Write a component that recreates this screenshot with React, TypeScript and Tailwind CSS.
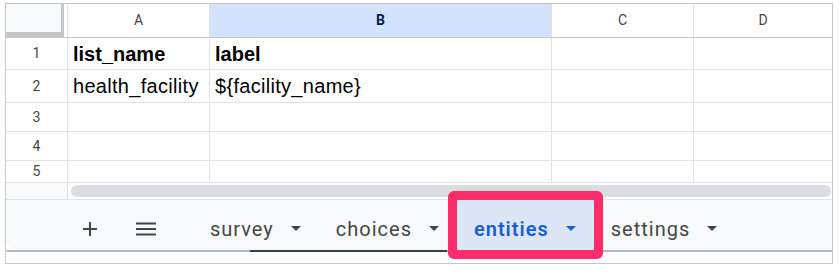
const COLS = [
  { key: "A", w: "w-[142px]" },
  { key: "B", w: "w-[342px]" },
  { key: "C", w: "w-[142px]" },
  { key: "D", w: "w-[138px]" },
];

const ROWS: { n: number; h: string; cells: string[]; bold?: boolean }[] = [
  { n: 1, h: "h-[32px]", cells: ["list_name", "label", "", ""], bold: true },
  { n: 2, h: "h-[33px]", cells: ["health_facility", "${facility_name}", "", ""] },
  { n: 3, h: "h-[29px]", cells: ["", "", "", ""] },
  { n: 4, h: "h-[29px]", cells: ["", "", "", ""] },
  { n: 5, h: "h-[22px]", cells: ["", "", "", ""] },
];

const Caret = ({ blue }: { blue?: boolean }) => (
  <svg width="10" height="5" viewBox="0 0 10 5" className="shrink-0">
    <path d="M0 0h10L5 5z" fill={blue ? "#1a5fd0" : "#444746"} />
  </svg>
);

const SheetTab = ({ name, active }: { name: string; active?: boolean }) => (
  <div
    className={
      active
        ? "relative flex items-center gap-[17px] h-full pt-[7px] pl-[17px] pr-[18px] bg-[#dde6f6]"
        : "flex items-center gap-[17px] h-full pt-[7px] pl-[17px] pr-[18px]"
    }
  >
    {active && (
      <div className="absolute -inset-[9px] border-[9px] border-[#fd2c6a] rounded-[6px]" />
    )}
    <span
      className={
        active
          ? "text-[20px] font-semibold tracking-[1px] text-[#1a5fd0]"
          : "text-[20px] tracking-[1px] text-[#444746]"
      }
    >
      {name}
    </span>
    <Caret blue={active} />
  </div>
);

const App = () => {
  return (
    <div className="w-[840px] h-[272px] bg-white pt-[3px] pl-[5px]">
      <div className="w-[828px] h-[261px] border border-[#c4c7c5] flex flex-col overflow-hidden">
        {/* column headers */}
        <div className="flex h-[34px] shrink-0 border-b border-[#c4c7c5] font-['Roboto',sans-serif] text-[14px]">
          <div className="w-[62px] shrink-0 flex border-r border-[#e1e3e1]">
            <div className="w-[58px] h-[33px] -mb-px bg-[#f8f9fa] border-b-[5px] border-r-[3px] border-[#c4c7c5]" />
          </div>
          {COLS.map((c) => (
            <div
              key={c.key}
              className={
                c.key === "B"
                  ? `${c.w} shrink-0 flex items-center justify-center bg-[#d3e3fd] border-r border-[#e1e3e1] font-bold text-[#041e49]`
                  : `${c.w} shrink-0 flex items-center justify-center border-r border-[#e1e3e1] text-[#444746] last:border-r-0`
              }
            >
              {c.key}
            </div>
          ))}
        </div>

        {/* rows */}
        {ROWS.map((r) => (
          <div key={r.n} className={`flex ${r.h} shrink-0 border-b border-[#e1e3e1]`}>
            <div className="w-[62px] shrink-0 flex items-center justify-center border-r border-[#e1e3e1] font-['Roboto',sans-serif] text-[14px] text-[#444746]">
              {r.n}
            </div>
            {COLS.map((c, i) => (
              <div
                key={c.key}
                className={`${c.w} shrink-0 flex items-center px-[5px] border-r border-[#e1e3e1] last:border-r-0 font-['Liberation_Sans',Arial,sans-serif] text-[20px] text-black whitespace-nowrap ${r.bold ? "font-bold" : "tracking-[0.3px]"}`}
              >
                {r.cells[i]}
              </div>
            ))}
          </div>
        ))}

        {/* horizontal scrollbar */}
        <div className="flex h-[16px] shrink-0 items-center">
          <div className="w-[62px] h-full shrink-0 bg-[#f8f9fa] border-r border-[#e1e3e1]" />
          <div className="flex-1 h-[12px] ml-[3px] mr-[1px] rounded-full bg-[#dadce0]" />
        </div>

        {/* sheet tab bar */}
        <div className="h-[53px] shrink-0 flex flex-col">
          <div className="flex-1 flex items-center bg-[#f8f9fa] border-t border-[#e1e3e1] rounded-bl-[12px] font-['Roboto',sans-serif]">
            <div className="flex items-center h-full pt-[7px] pl-[77px] gap-[39px] mr-[37px]">
              <svg width="14" height="14" viewBox="0 0 14 14">
                <path d="M7 0v14M0 7h14" stroke="#444746" strokeWidth="2" />
              </svg>
              <svg width="20" height="14" viewBox="0 0 20 14">
                <path d="M0 1.5h20M0 7h20M0 12.5h20" stroke="#444746" strokeWidth="2" />
              </svg>
            </div>
            <SheetTab name="survey" />
            <SheetTab name="choices" />
            <SheetTab name="entities" active />
            <SheetTab name="settings" />
          </div>
          <div className="flex h-[2px] shrink-0">
            <div className="w-[244px] bg-[#b5b8bb] rounded-bl-[12px]" />
            <div className="w-[197px] bg-[#3c4043]" />
            <div className="flex-1 bg-[#b5b8bb]" />
          </div>
        </div>
      </div>
    </div>
  );
};

export default App;
